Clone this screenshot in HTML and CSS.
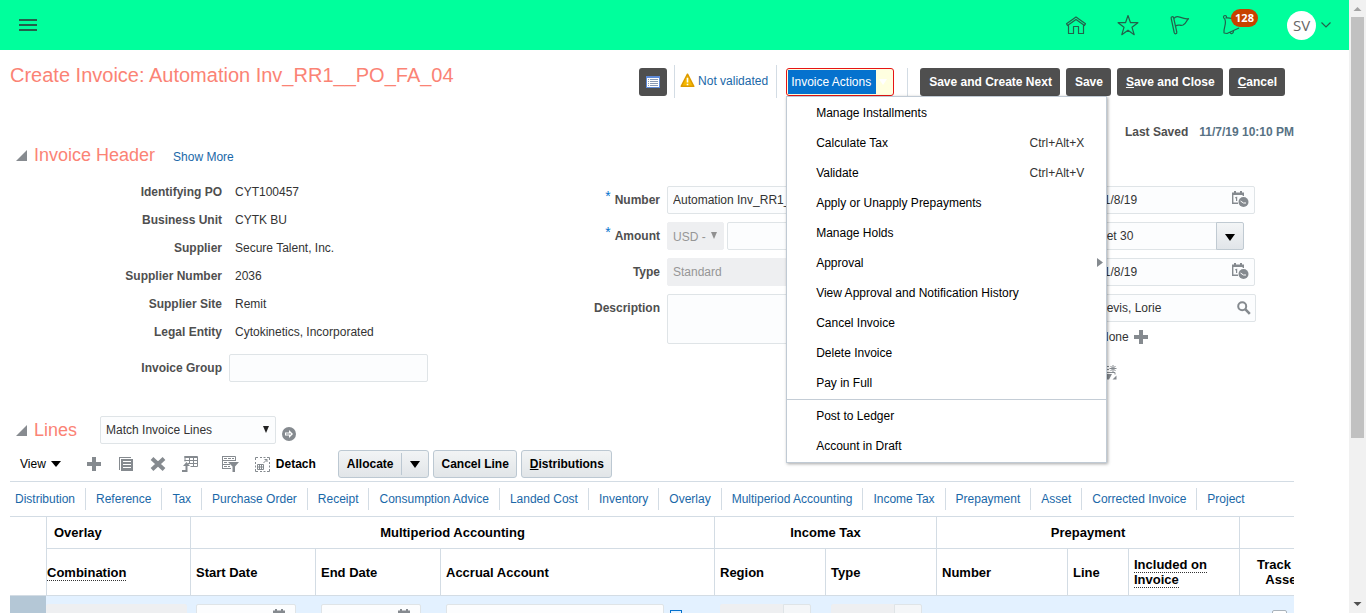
FILE: index.html
```html
<!DOCTYPE html>
<html lang="en">
<head>
<meta charset="utf-8">
<title>Create Invoice</title>
<link rel="stylesheet" href="styles.css">
</head>
<body>
<div class="app">
  <header class="topbar">
    <button class="icon-btn" aria-label="Navigator"><svg width="20" height="14" viewBox="0 0 20 14" shape-rendering="crispEdges"><path d="M1 1h18v2H1zM1 6h18v2H1zM1 11h18v2H1z" fill="#23624b"/></svg></button>
    <nav class="topnav">
      <button class="icon-btn" aria-label="Home"><svg class="line" width="24" height="24" viewBox="0 0 24 24"><path d="M2.500 10.800L12 4l9.500 6.800-1 1.700L12 6.500l-8.500 6zM4.500 12v8.500h5v-7h5v7h5V12"/></svg></button>
      <button class="icon-btn" aria-label="Favorites"><svg class="line" width="24" height="24" viewBox="0 0 24 24"><path d="M12 2.500l2.500 7.200h7.400l-5.900 4.600 2.200 7.400-6.200-4.500-6.200 4.500L8 14.300 2.100 9.700h7.400z"/></svg></button>
      <button class="icon-btn" aria-label="Watchlist"><svg class="line" width="24" height="24" viewBox="0 0 24 24"><path d="M3.200 5.500c-.5-2 1.800-2.500 2.400-.8L8.800 19c.3 2-2 2.500-2.600.5zM5.800 5.500c4.500-5 6.700 1.200 14.700.2-2.500 1.800-1.500 4.300-5.500 6.300-3 1.300-4.500-1.500-7.600 1.200"/></svg></button>
      <button class="icon-btn bell" aria-label="Notifications"><svg class="line" width="24" height="24" viewBox="0 0 24 24"><path d="M4.500 5.500C3 5 3.200 2.500 5 2.500c1.500 0 2 1.500 1 2.500 5-1 7 1 12.500 3.500M4.500 5.500c3 5-1.500 9.500-.5 14.500l3 .5L19 15M10 19.500c1 2 3.500 1 3.500-1.500"/></svg><span class="badge">128</span></button>
    </nav>
    <button class="user" aria-label="User menu"><span class="avatar">SV</span><svg width="12" height="8" viewBox="0 0 12 8"><path d="M1.500 1.500L6 6l4.500-4.500" fill="none" stroke="#23624b" stroke-width="1.200"/></svg></button>
  </header>

  <main class="page">
    <div class="title-row">
      <h1>Create Invoice: Automation Inv_RR1__PO_FA_04</h1>
      <div class="actions">
        <button class="dark square" aria-label="Details"><svg width="14" height="12" viewBox="0 0 14 12" shape-rendering="crispEdges"><path fill="#5e8ad8" d="M0 0h14v12H0z"/><path fill="#fff" d="M1 2h12v9H1z"/><path fill="#8a9ab4" d="M2 3h1v1H2zM4 3h8v1H4zM2 5h1v1H2zM4 5h8v1H4zM2 7h1v1H2zM4 7h8v1H4zM2 9h1v1H2zM4 9h8v1H4z"/></svg></button>
        <a class="status" href="#"><svg width="15" height="15" viewBox="0 0 15 15"><path d="M7.500 1.200l6.300 12.100H1.200z" fill="#f5b800" stroke="#dd9a00" stroke-width="1.500" stroke-linejoin="round"/><path d="M6.700 4.800h1.600v4.700H6.700zM6.700 10.700h1.600v1.600H6.700z" fill="#fff"/></svg>Not validated</a>
        <div class="menu-wrap">
          <button class="menu-btn" aria-expanded="true"><span>Invoice Actions</span><svg width="8" height="6" viewBox="0 0 8 6"><path d="M0 0h8L4 6z" fill="#fff"/></svg></button>
          <div class="menu" role="menu">
            <button role="menuitem">Manage Installments</button>
            <button role="menuitem">Calculate Tax<kbd>Ctrl+Alt+X</kbd></button>
            <button role="menuitem">Validate<kbd>Ctrl+Alt+V</kbd></button>
            <button role="menuitem">Apply or Unapply Prepayments</button>
            <button role="menuitem">Manage Holds</button>
            <button role="menuitem" class="sub">Approval<svg width="6" height="9" viewBox="0 0 6 9"><path d="M0 0v9l6-4.500z" fill="#858a8f"/></svg></button>
            <button role="menuitem">View Approval and Notification History</button>
            <button role="menuitem">Cancel Invoice</button>
            <button role="menuitem">Delete Invoice</button>
            <button role="menuitem">Pay in Full</button>
            <hr>
            <button role="menuitem">Post to Ledger</button>
            <button role="menuitem">Account in Draft</button>
          </div>
        </div>
        <div class="saves">
          <button class="dark">Save and Create Next</button>
          <button class="dark">Save</button>
          <button class="dark"><u>S</u>ave and Close</button>
          <button class="dark"><u>C</u>ancel</button>
        </div>
      </div>
    </div>
    <p class="saved"><span>Last Saved</span><time>11/7/19 10:10 PM</time></p>

    <section class="header-section">
      <div class="section-head">
        <svg class="tri" width="11" height="11" viewBox="0 0 11 11"><path d="M11 0v11H0z" fill="#878b90"/></svg>
        <h2>Invoice Header</h2><a class="more" href="#">Show More</a>
      </div>
      <div class="form">
        <div class="left">
          <dl>
            <dt>Identifying PO</dt><dd>CYT100457</dd>
            <dt>Business Unit</dt><dd>CYTK BU</dd>
            <dt>Supplier</dt><dd>Secure Talent, Inc.</dd>
            <dt>Supplier Number</dt><dd>2036</dd>
            <dt>Supplier Site</dt><dd>Remit</dd>
            <dt>Legal Entity</dt><dd>Cytokinetics, Incorporated</dd>
          </dl>
          <div class="field group"><label for="grp">Invoice Group</label><input class="box" id="grp" type="text"></div>
        </div>
        <div class="mid">
          <div class="field"><label for="num"><i>*</i>Number</label><input class="box" id="num" type="text" value="Automation Inv_RR1__PO_FA_04"></div>
          <div class="field"><label for="amt"><i>*</i>Amount</label><span class="select cur"><select class="box" aria-label="Currency" disabled><option>USD -</option></select><svg width="6" height="7" viewBox="0 0 6 7"><path d="M0 0h6L3 7z" fill="#909090"/></svg></span><input class="box amount" id="amt" type="text"></div>
          <div class="field"><label for="typ">Type</label><input class="box" id="typ" type="text" value="Standard" disabled></div>
          <div class="field"><label for="desc">Description</label><textarea class="box" id="desc"></textarea></div>
        </div>
        <div class="right">
          <div class="field"><label for="date">Date</label><span class="with-icon"><input class="box" id="date" type="text" value="11/8/19"><svg width="17" height="17" viewBox="0 0 17 17"><use href="#cal"/></svg></span></div>
          <div class="field"><label for="terms">Terms</label><span class="combo"><input class="box" id="terms" type="text" value="Net 30"><button aria-label="Show terms"><svg width="10" height="7" viewBox="0 0 10 7"><path d="M0 0h10L5 7z"/></svg></button></span></div>
          <div class="field"><label for="tdate">Terms Date</label><span class="with-icon"><input class="box" id="tdate" type="text" value="11/8/19"><svg width="17" height="17" viewBox="0 0 17 17"><use href="#cal"/></svg></span></div>
          <div class="field"><label for="req">Requester</label><span class="with-icon"><input class="box" id="req" type="text" value="Devis, Lorie"><svg width="14" height="14" viewBox="0 0 14 14"><circle cx="5.200" cy="5.200" r="4" fill="none" stroke="#858a8f" stroke-width="2"/><path d="M8.200 8.200l4.600 4.600" stroke="#858a8f" stroke-width="2.600"/></svg></span></div>
          <div class="field attach"><b>Attachments</b><span>None</span><button class="icon-btn" aria-label="Add attachment"><svg width="14" height="14" viewBox="0 0 14 14" fill="#858a8f"><use href="#plus"/></svg></button></div>
          <div class="field note"><b>Note</b><button class="icon-btn" aria-label="Note"><svg width="17" height="15" viewBox="0 0 17 15" stroke="#858a8f" fill="none"><path d="M0 1.500h9M0 4.500h9M0 7.500h15v2"/><path d="M13 0v7M9.500 3.500h7M10.500 1l5 5M15.500 1l-5 5"/><path d="M5 9h7l-3 5.500H5zM12.500 14.500l4-4v4z" fill="#858a8f" stroke="none"/></svg></button></div>
        </div>
      </div>
    </section>

    <section class="lines">
      <div class="section-head">
        <svg class="tri" width="11" height="11" viewBox="0 0 11 11"><path d="M11 0v11H0z" fill="#878b90"/></svg>
        <h2>Lines</h2>
        <span class="select match"><select class="box" aria-label="Line action"><option>Match Invoice Lines</option></select><svg width="6" height="7" viewBox="0 0 6 7"><path d="M0 0h6L3 7z" fill="#222"/></svg></span>
        <button class="icon-btn go" aria-label="Go"><svg width="14" height="14" viewBox="0 0 14 14"><circle cx="7" cy="7" r="7" fill="#858a8f"/><path d="M3 5.500h4V3L11 7l-4 4V8.500H3z" fill="#fff"/><path d="M4 7h5" stroke="#858a8f"/></svg></button>
      </div>
      <div class="toolbar">
        <button class="view">View<svg width="10" height="6" viewBox="0 0 10 6"><path d="M0 0h10L5 6z"/></svg></button>
        <div class="tools">
          <button class="icon-btn" aria-label="Add row"><svg width="16" height="16" viewBox="-1 -1 16 16" fill="#858a8f"><path id="plus" d="M5 0h4v5h5v4H9v5H5V9H0V5h5z"/></svg></button>
          <button class="icon-btn" aria-label="Duplicate"><svg width="16" height="16" viewBox="0 0 16 16" shape-rendering="crispEdges"><path d="M1 1h12v1H2v12H1zM3 3h12v12H3z" fill="#858a8f"/><path d="M5 5h8v1H5zM5 8h8v1H5zM5 11h8v1H5z" fill="#fff"/></svg></button>
          <button class="icon-btn" aria-label="Delete"><svg width="16" height="16" viewBox="0 0 16 16"><path d="M2 2.500l12 11M14 2.500l-12 11" stroke="#858a8f" stroke-width="4"/></svg></button>
          <button class="icon-btn" aria-label="Match"><svg width="16" height="16" viewBox="0 0 16 16" fill="none" stroke="#858a8f"><path d="M2.500.5h13v10H8.500M2.500 1.500h13M2.500 4.500h13M3 0v5.500M7.500 1v7M11.500 1v9M6 7.500h9.500"/><path d="M0 15h4.500V9" stroke-width="2"/><path d="M1 10l3.500-4L8 10z" fill="#858a8f" stroke="none"/></svg></button>
        </div>
        <button class="icon-btn" aria-label="Query by example"><svg width="17" height="16" viewBox="0 0 17 16" fill="none" stroke="#858a8f"><path d="M0 .5h13.500V4M.5 0v13M0 4.500h14M0 8.500h8M0 12.500h9"/><path d="M2 2.500h10M2 6.500h3M2 10.500h6" stroke-dasharray="3 1"/><path d="M6 6h11l-4 4.500V16h-2.500v-5.500z" fill="#858a8f" stroke="none"/></svg></button>
        <button class="detach"><svg width="15" height="15" viewBox="0 0 15 15" fill="none" stroke="#858a8f"><path d="M.5 3V.5H3M5 .5h2M8.500.5h2M12 .5h2.500V3M14.500 5v2M14.500 8.500v2M14.500 12v2.500H12M10.500 14.500h-2M7 14.500H5M3 14.500H.5V12M.5 10.500v-2M.5 7V5"/><path d="M2.500 7.500h6v5h-6zM2.500 10h6M4.500 7.500v5M6.500 7.500v5M8.500 6l3.500-3.500M9.500 2.500H12V5"/></svg>Detach</button>
        <div class="cmds">
          <span class="split"><button>Allocate</button><button aria-label="More allocate options"><svg width="10" height="7" viewBox="0 0 10 7"><path d="M0 0h10L5 7z"/></svg></button></span>
          <button class="light">Cancel Line</button>
          <button class="light"><u>D</u>istributions</button>
        </div>
      </div>
      <nav class="tabs">
        <a href="#">Distribution</a><a href="#">Reference</a><a href="#">Tax</a><a href="#">Purchase Order</a><a href="#">Receipt</a><a href="#">Consumption Advice</a><a href="#">Landed Cost</a><a href="#">Inventory</a><a href="#">Overlay</a><a href="#">Multiperiod Accounting</a><a href="#">Income Tax</a><a href="#">Prepayment</a><a href="#">Asset</a><a href="#">Corrected Invoice</a><a href="#">Project</a>
      </nav>
      <div class="grid">
        <table>
          <colgroup><col class="c36"><col class="c144"><col class="c125"><col class="c125"><col class="c274"><col class="c111"><col class="c111"><col class="c131"><col class="c61"><col class="c111"><col class="c87"></colgroup>
          <thead>
            <tr><td rowspan="2" class="corner"></td><th class="start">Overlay</th><th colspan="3">Multiperiod Accounting</th><th colspan="2">Income Tax</th><th colspan="3">Prepayment</th><th></th></tr>
            <tr><th class="flush"><abbr>Combination</abbr></th><th>Start Date</th><th>End Date</th><th>Accrual Account</th><th>Region</th><th>Type</th><th>Number</th><th>Line</th><th><abbr>Included on Invoice</abbr></th><th class="center">Track as Asset</th></tr>
          </thead>
          <tbody>
            <tr>
              <td class="rowhead"></td>
              <td class="flush"><input class="box combo-in" type="text" aria-label="Combination" disabled></td>
              <td><span class="with-icon"><input class="box date" type="text" aria-label="Start Date"><svg width="17" height="17" viewBox="0 0 17 17"><use href="#cal"/></svg></span></td>
              <td><span class="with-icon"><input class="box date" type="text" aria-label="End Date"><svg width="17" height="17" viewBox="0 0 17 17"><use href="#cal"/></svg></span></td>
              <td><span class="account"><input class="box" type="text" aria-label="Accrual Account"><button aria-label="Select account"></button></span></td>
              <td><span class="combo small"><input class="box" type="text" aria-label="Region" disabled><button aria-label="Show regions" disabled></button></span></td>
              <td><span class="combo small"><input class="box" type="text" aria-label="Type" disabled><button aria-label="Show types" disabled></button></span></td>
              <td></td><td></td><td></td>
              <td class="track"><input type="checkbox" aria-label="Track as Asset"></td>
            </tr>
          </tbody>
        </table>
      </div>
    </section>
  </main>
</div>
<div class="scrollbar" aria-hidden="true">
  <svg width="17" height="17" viewBox="0 0 17 17"><path d="M4.500 11h8L8.500 7z" fill="#a3a3a3"/></svg>
  <div class="thumb"></div>
  <svg width="17" height="17" viewBox="0 0 17 17"><path d="M4.500 6h8l-4 4z" fill="#505050"/></svg>
</div>
<svg class="defs" aria-hidden="true"><defs><g id="cal"><path d="M.7 3v9.300H6M11.300 3v2" fill="none" stroke="#858a8f" stroke-width="1.400"/><path d="M0 1.500h12V4H0zM2 0h2v2H2zM8 0h2v2H8zM3 6.500L5.200 5.500V10H4V7.200H3z" fill="#858a8f"/><circle cx="11.500" cy="11" r="5" fill="#858a8f"/><path d="M8.500 10l3 2h2.500" fill="none" stroke="#fff"/></g></defs></svg>
</body>
</html>
```
FILE: styles.css
```css
* { box-sizing: border-box; }
body {
  margin: 0;
  height: 100vh;
  display: flex;
  overflow: hidden;
  background: #fff;
  color: #333;
  font: 12px/14px "Liberation Sans", Arial, sans-serif;
}
button, input, select, textarea { font: inherit; color: inherit; margin: 0; }
button { border: 0; background: none; padding: 0; white-space: nowrap; }
h1, h2, p, dl, dd { margin: 0; }
h1, h2 { font-weight: 400; color: #fb8375; }
h1 { font-size: 20px; line-height: 26px; }
h2 { font-size: 18px; line-height: 22px; }
a { color: #1a68a8; text-decoration: none; white-space: nowrap; }
svg { display: block; flex: none; }
.defs { position: absolute; width: 0; height: 0; }
.app { flex: 1; min-width: 0; overflow: hidden; }

.topbar {
  height: 50px;
  padding: 0 17px 0 18px;
  display: flex;
  align-items: center;
  background: #00ff9c;
}
.topnav { margin-left: auto; display: flex; gap: 28px; }
.line { fill: none; stroke: #23624b; stroke-width: 1.2; stroke-linejoin: round; }
.bell { position: relative; }
.badge {
  position: absolute;
  left: 11px;
  top: -4px;
  width: 27px;
  height: 18px;
  border-radius: 9px;
  background: #c74200;
  color: #fff;
  font: bold 11px/18px "Open Sans", sans-serif;
}
.user { display: flex; align-items: center; gap: 4px; margin-left: 43px; }
.avatar {
  width: 29px;
  height: 29px;
  border-radius: 50%;
  background: #fff;
  color: #666;
  font: 15px/29px "Open Sans", sans-serif;
}

.page { padding: 12px 55px 0 10px; }
.title-row { display: flex; justify-content: space-between; align-items: flex-start; padding-right: 9px; }
.actions { display: flex; align-items: center; padding-top: 3px; }
.dark {
  height: 28px;
  padding: 0 8px 0 9px;
  border-radius: 3px;
  background: #4f4f4f;
  color: #fff;
  font-weight: bold;
}
.square { width: 28px; padding: 0 7px; }
.status {
  height: 33px;
  margin: 0 9px 0 7px;
  padding: 0 8px 2px 5px;
  border: solid #d3dce4;
  border-width: 0 1px;
  display: flex;
  align-items: center;
  gap: 3px;
}
.menu-wrap { position: relative; }
.menu-btn {
  width: 108px;
  height: 28px;
  padding: 1px;
  border: 1px solid #e61414;
  border-radius: 3px;
  background: #ffffe0;
  display: flex;
  align-items: center;
  gap: 3px;
  color: #fff;
}
.menu-btn span { padding: 0 5px 0 3px; line-height: 24px; background: #0572ce; }
.menu {
  position: absolute;
  z-index: 2;
  top: 28px;
  left: 0;
  width: 321px;
  padding: 1px 0;
  border: 1px solid #c0cad4;
  background: #fff;
  box-shadow: 1px 1px 3px rgba(0, 0, 0, .35);
}
.menu button {
  width: 100%;
  height: 30px;
  padding: 0 22px 0 29px;
  display: flex;
  align-items: center;
  justify-content: space-between;
  color: #000;
}
.menu .sub { padding-right: 3px; }
.menu kbd { font: inherit; color: #333; }
.menu hr { margin: 1px 0; border: 0; border-top: 1px solid #c4cdd6; }
.saves { display: flex; gap: 6px; margin-left: 13px; padding-left: 12px; border-left: 1px solid #d3dce4; }
.saved { display: flex; justify-content: flex-end; gap: 11px; margin-top: 27px; font-weight: bold; color: #4f4f4f; }
.saved time { color: #587284; }

.header-section { padding-top: 5px; }
.section-head { display: flex; align-items: center; padding-left: 6px; }
.section-head h2 { margin-left: 7px; }
.more { margin: 3px 0 0 18px; }
.form {
  display: grid;
  grid-template-columns: 556px 426px 1fr;
  padding-top: 12px;
  min-height: 250px;
}
.left dl { display: grid; grid-template-columns: 212px 1fr; column-gap: 13px; line-height: 28px; }
.left dt, .field label, .field b { text-align: right; font-weight: bold; color: #4f4f4f; }
.field { display: flex; gap: 7px; margin-bottom: 8px; line-height: 28px; }
.field label, .field b { width: 94px; flex: none; }
.field i { font-style: normal; font-size: 14px; line-height: 14px; vertical-align: 3px; color: #0572ce; margin-right: 4px; font-weight: 400; }
.left .group label { width: 212px; }
.group { margin-top: 8px; }
.group .box { width: 199px; }
.mid, .right { padding-top: 8px; }
.mid .box { width: 200px; }
.mid textarea { height: 50px; }
.mid .cur .box { width: 57px; }
.mid .amount { width: 140px; margin-left: -4px; }
.box {
  height: 28px;
  padding: 0 5px;
  border: 1px solid #dfe4e7;
  border-radius: 2px;
  background: #fcfdfe;
  resize: none;
  appearance: none;
  outline: 0;
}
.box:disabled { background: #eeeff1; border-color: #eeeff1; color: #969696; opacity: 1; }
.select, .with-icon { position: relative; display: flex; }
.select svg { position: absolute; right: 7px; top: 10px; }
.right .field { gap: 6px; }
.right .box { width: 163px; }
.with-icon svg { position: absolute; right: 6px; top: 5px; }
.right #req { width: 164px; }
.right #req + svg { top: 7px; right: 5px; }
.combo { display: flex; }
.right .combo .box { width: 125px; border-radius: 2px 0 0 2px; }
.combo button {
  width: 28px;
  height: 28px;
  padding: 3px 0 0 8px;
  margin-left: -1px;
  border: 1px solid #c0cad2;
  border-radius: 0 2px 2px 0;
  background: linear-gradient(#f3f5f6, #e1e5e9);
}
.attach, .note { align-items: center; }
.right .attach { line-height: 14px; margin-bottom: 14px; }
.attach span { margin-left: 8px; }
.attach .icon-btn { margin-left: -1px; }
.note .icon-btn { margin-left: 8px; }

.lines .section-head { height: 28px; }
.match { margin-left: 23px; }
.match .box { width: 176px; }
.go { margin: 8px 0 0 6px; }
.toolbar { display: flex; align-items: center; height: 37px; padding: 3px 0 0 10px; color: #000; }
.view { display: flex; align-items: center; gap: 5px; }
.tools { display: flex; gap: 16px; margin: 0 24px 0 25px; }
.detach { display: flex; align-items: center; gap: 6px; margin-left: 16px; font-weight: bold; }
.cmds { display: flex; gap: 4px; margin-left: 22px; font-weight: bold; }
.split, .light {
  height: 28px;
  border: 1px solid #bcc8d2;
  border-radius: 3px;
  background: linear-gradient(#f2f4f5, #e1e5e8);
  display: flex;
  align-items: center;
  padding: 0 7px 0 8px;
}
.split { padding: 0; }
.split button { height: 22px; padding: 0 7px 0 8px; }
.split button + button { padding: 0 8px; border-left: 1px solid #bcc8d2; }
.tabs {
  display: flex;
  align-items: center;
  height: 36px;
  border: solid #d3dce4;
  border-width: 1px 0;
}
.tabs a { padding: 0 10px; line-height: 22px; border-right: 1px solid #d3dce4; }
.tabs a:first-child { padding-left: 5px; }
.tabs a:last-child { border: 0; }

.grid { overflow: hidden; }
table { width: 1316px; table-layout: fixed; border-collapse: separate; border-spacing: 0; font-size: 13px; line-height: 15px; color: #000; }
.c36 { width: 36px; } .c144 { width: 144px; } .c125 { width: 125px; } .c274 { width: 274px; }
.c111 { width: 111px; } .c131 { width: 131px; } .c61 { width: 61px; } .c87 { width: 87px; }
th, td { padding: 0 5px; }
th { border: solid #d3dce4; border-width: 0 0 1px 1px; height: 32px; }
tr + tr th { height: 47px; text-align: left; }
tr .start { text-align: left; padding-left: 7px; }
tr .flush { padding-left: 0; }
tr + tr .center { text-align: center; }
abbr { border-bottom: 1px dotted #333; }
.corner { border-bottom: 1px solid #d3dce4; }
tbody td { height: 44px; padding: 8px 0 8px 6px; vertical-align: top; background: #e3f1ff; }
tbody .rowhead { background: #b4c7d6; }
.combo-in { width: 141px; display: block; }
td .with-icon { width: 100px; }
.date { width: 100px; }
.account { display: flex; gap: 6px; }
.account .box { width: 218px; }
.account button { width: 12px; height: 12px; margin-top: 6px; border: 1px solid #0572ce; }
.small .box { width: 64px; }
.small button { border-color: #dfe4e7; background: #f4f6f8; }
.track input { width: 15px; height: 15px; margin: 6px 0 0 27px; appearance: none; border: 1px solid #aab3bb; border-radius: 2px; background: #fff; }

.scrollbar { width: 17px; display: flex; flex-direction: column; background: #f1f1f1; }
.thumb { height: 421px; margin: 0 2px auto; background: #c1c1c1; }
```
